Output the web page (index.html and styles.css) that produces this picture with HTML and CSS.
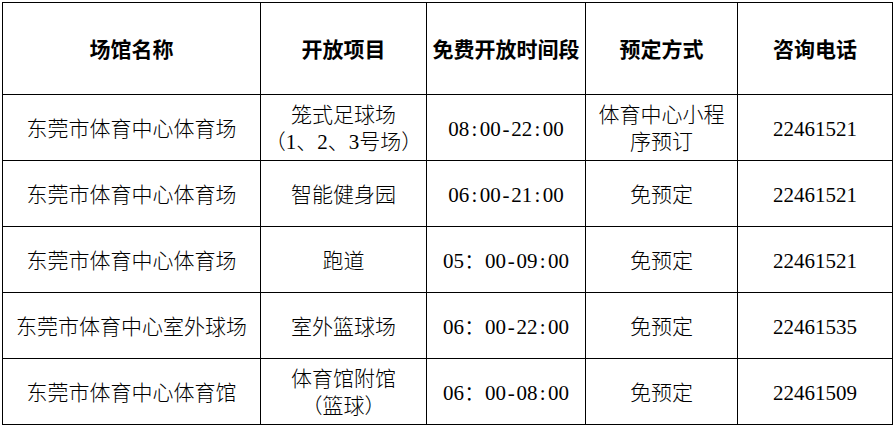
FILE: index.html
```html
<!DOCTYPE html>
<html lang="zh-CN">
<head>
<meta charset="utf-8">
<title>东莞市体育中心免费开放场馆</title>
<link rel="stylesheet" href="styles.css">
</head>
<body>
<table class="venues">
  <colgroup>
    <col class="c-name">
    <col class="c-item">
    <col class="c-time">
    <col class="c-book">
    <col class="c-phone">
  </colgroup>
  <thead>
    <tr class="head-row">
      <th>场馆名称</th>
      <th>开放项目</th>
      <th>免费开放时间段</th>
      <th>预定方式</th>
      <th>咨询电话</th>
    </tr>
  </thead>
  <tbody>
    <tr>
      <td>东莞市体育中心体育场</td>
      <td>笼式足球场<br>（1、2、3号场）</td>
      <td class="num">08<span class="sep">:</span>00<span class="sep">-</span>22<span class="sep">:</span>00</td>
      <td>体育中心小程<br>序预订</td>
      <td class="num">22461521</td>
    </tr>
    <tr>
      <td>东莞市体育中心体育场</td>
      <td>智能健身园</td>
      <td class="num">06<span class="sep">:</span>00<span class="sep">-</span>21<span class="sep">:</span>00</td>
      <td>免预定</td>
      <td class="num">22461521</td>
    </tr>
    <tr>
      <td>东莞市体育中心体育场</td>
      <td>跑道</td>
      <td class="num">05：00<span class="sep">-</span>09<span class="sep">:</span>00</td>
      <td>免预定</td>
      <td class="num">22461521</td>
    </tr>
    <tr>
      <td>东莞市体育中心室外球场</td>
      <td>室外篮球场</td>
      <td class="num">06：00<span class="sep">-</span>22<span class="sep">:</span>00</td>
      <td>免预定</td>
      <td class="num">22461535</td>
    </tr>
    <tr>
      <td>东莞市体育中心体育馆</td>
      <td>体育馆附馆<br>（篮球）</td>
      <td class="num">06：00<span class="sep">-</span>08<span class="sep">:</span>00</td>
      <td>免预定</td>
      <td class="num">22461509</td>
    </tr>
  </tbody>
</table>
</body>
</html>
```

FILE: styles.css
```css
html, body {
  margin: 0;
  padding: 0;
  background: #ffffff;
}

body {
  padding: 2px 0 0 2px;
  font-family: "Liberation Serif", "Noto Sans CJK SC", serif;
  color: #000000;
}

.venues {
  border-collapse: collapse;
  table-layout: fixed;
  width: 890px;
  font-size: 21px;
  line-height: 27px;
}

.c-name { width: 258px; }
.c-item { width: 166px; }
.c-time { width: 159px; }
.c-book { width: 152px; }
.c-phone { width: 155px; }

.venues th,
.venues td {
  border: 1px solid #000000;
  padding: 0 2px;
  text-align: center;
  vertical-align: middle;
  white-space: nowrap;
}

.venues th {
  font-family: "Noto Sans CJK SC", sans-serif;
  font-weight: 700;
  height: 91px;
}

.venues td {
  font-family: "Liberation Serif", "Noto Sans CJK SC", serif;
  font-weight: 300;
  height: 62px;
  padding-top: 3px;
}

.num {
  font-weight: 400;
}

.sep {
  display: inline-block;
  width: 0.5em;
  text-align: center;
}
```
